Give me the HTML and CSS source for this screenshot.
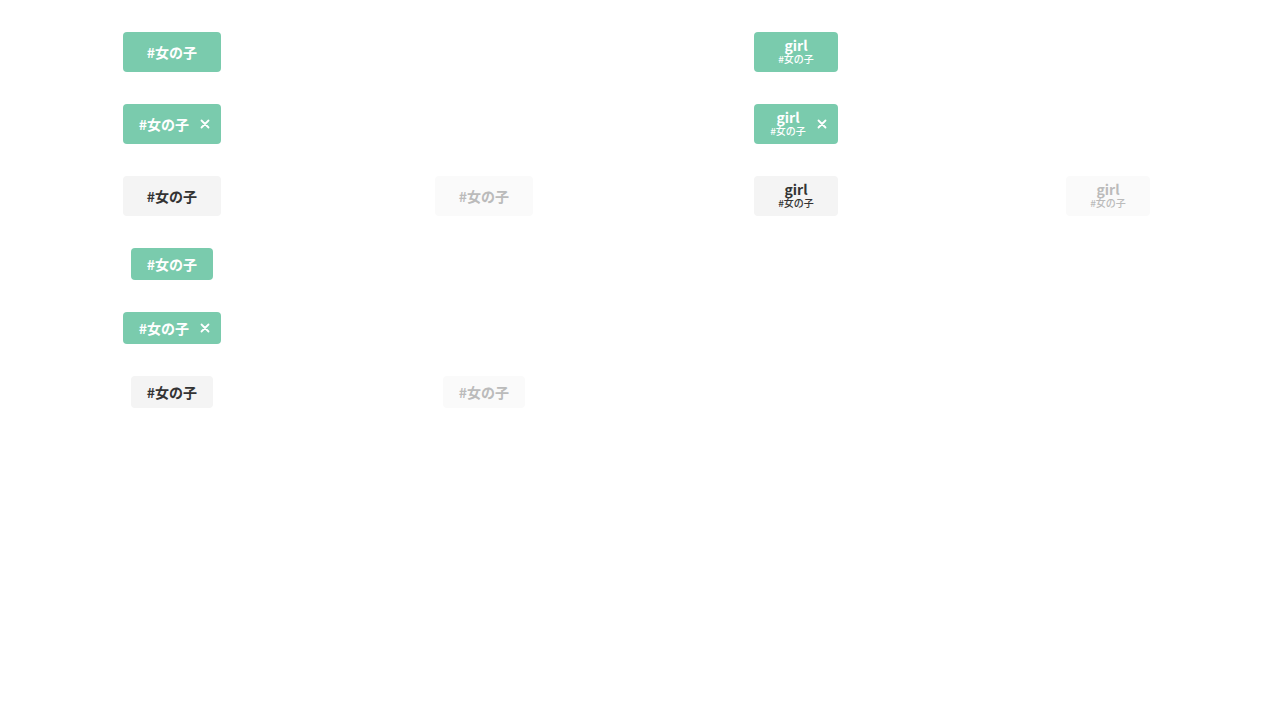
FILE: index.html
```html
<!DOCTYPE html>
<html lang="ja">
<head>
<meta charset="utf-8">
<link rel="stylesheet" href="styles.css">
</head>
<body>
<div class="grid">
  <div class="cell"><span class="tag tag-primary">#女の子</span></div>
  <div class="cell"></div>
  <div class="cell"><span class="tag tag-primary tag-two"><span class="main">girl</span><span class="sub">#女の子</span></span></div>
  <div class="cell"></div>

  <div class="cell"><span class="tag tag-primary tag-closable"><span class="label">#女の子</span><svg class="close" viewBox="0 0 16 16"><path d="M4.5 4.5 L11.5 11.5 M11.5 4.5 L4.5 11.5"/></svg></span></div>
  <div class="cell"></div>
  <div class="cell"><span class="tag tag-primary tag-two tag-closable"><span class="lines"><span class="main">girl</span><span class="sub">#女の子</span></span><svg class="close" viewBox="0 0 16 16"><path d="M4.5 4.5 L11.5 11.5 M11.5 4.5 L4.5 11.5"/></svg></span></div>
  <div class="cell"></div>

  <div class="cell"><span class="tag tag-gray">#女の子</span></div>
  <div class="cell"><span class="tag tag-disabled">#女の子</span></div>
  <div class="cell"><span class="tag tag-gray tag-two"><span class="main">girl</span><span class="sub">#女の子</span></span></div>
  <div class="cell"><span class="tag tag-disabled tag-two"><span class="main">girl</span><span class="sub">#女の子</span></span></div>

  <div class="cell"><span class="tag tag-primary tag-small">#女の子</span></div>
  <div class="cell"></div>
  <div class="cell"></div>
  <div class="cell"></div>

  <div class="cell"><span class="tag tag-primary tag-small tag-closable"><span class="label">#女の子</span><svg class="close" viewBox="0 0 16 16"><path d="M4.5 4.5 L11.5 11.5 M11.5 4.5 L4.5 11.5"/></svg></span></div>
  <div class="cell"></div>
  <div class="cell"></div>
  <div class="cell"></div>

  <div class="cell"><span class="tag tag-gray tag-small">#女の子</span></div>
  <div class="cell"><span class="tag tag-disabled tag-small">#女の子</span></div>
  <div class="cell"></div>
  <div class="cell"></div>
</div>
</body>
</html>
```
FILE: styles.css
```css
html, body {
  margin: 0;
  padding: 0;
  background: #ffffff;
}
body {
  padding: 32px 16px;
  font-family: "Noto Sans CJK JP", "Noto Sans", sans-serif;
}
.grid {
  display: grid;
  grid-template-columns: repeat(4, 1fr);
  row-gap: 32px;
}
.cell {
  display: flex;
  justify-content: center;
  align-items: center;
}
.tag {
  box-sizing: border-box;
  display: inline-flex;
  align-items: center;
  justify-content: center;
  height: 40px;
  padding: 0 24px;
  border-radius: 4px;
  font-size: 14px;
  font-weight: 700;
  line-height: 20px;
  white-space: nowrap;
}
.tag-primary {
  background: #7acbad;
  color: #ffffff;
}
.tag-gray {
  background: #f4f4f4;
  color: #333333;
}
.tag-disabled {
  background: #fafafa;
  color: #bbbbbb;
}
.tag-small {
  height: 32px;
  padding: 0 16px;
}
.tag-closable {
  padding: 0 8px 0 16px;
  gap: 8px;
}
.close {
  width: 16px;
  height: 16px;
  flex: none;
}
.close path {
  fill: none;
  stroke: currentColor;
  stroke-width: 1.8;
  stroke-linecap: round;
}
.tag-two {
  flex-direction: column;
}
.tag-two.tag-closable {
  flex-direction: row;
}
.lines {
  display: flex;
  flex-direction: column;
  align-items: center;
}
.main {
  font-size: 14px;
  line-height: 14px;
  font-weight: 700;
}
.sub {
  font-size: 10px;
  line-height: 14px;
  font-weight: 500;
}
```
